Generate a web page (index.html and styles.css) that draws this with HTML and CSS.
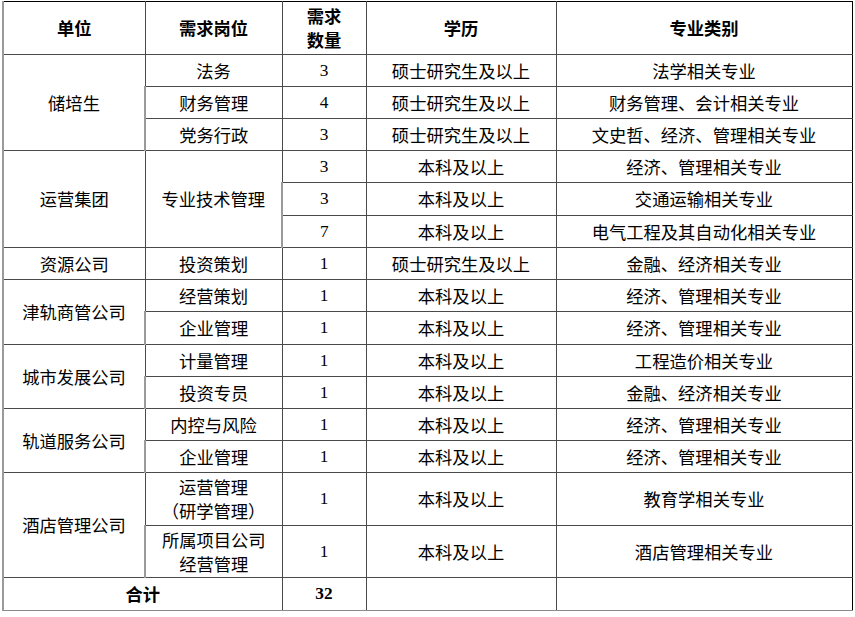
FILE: index.html
```html
<!DOCTYPE html>
<html lang="zh-CN">
<head>
<meta charset="utf-8">
<title>需求岗位</title>
<link rel="stylesheet" href="styles.css">
</head>
<body>
<table class="grid">
  <colgroup>
    <col class="c-unit"><col class="c-post"><col class="c-num"><col class="c-edu"><col class="c-major">
  </colgroup>
  <thead>
    <tr class="r-head">
      <th>单位</th><th>需求岗位</th><th>需求<br>数量</th><th>学历</th><th>专业类别</th>
    </tr>
  </thead>
  <tbody>
    <tr class="r32"><td rowspan="3">储培生</td><td>法务</td><td class="num">3</td><td>硕士研究生及以上</td><td>法学相关专业</td></tr>
    <tr class="r32"><td>财务管理</td><td class="num">4</td><td>硕士研究生及以上</td><td>财务管理、会计相关专业</td></tr>
    <tr class="r32"><td>党务行政</td><td class="num">3</td><td>硕士研究生及以上</td><td>文史哲、经济、管理相关专业</td></tr>
    <tr class="r32"><td rowspan="3">运营集团</td><td rowspan="3">专业技术管理</td><td class="num">3</td><td>本科及以上</td><td>经济、管理相关专业</td></tr>
    <tr class="r33"><td class="num">3</td><td>本科及以上</td><td>交通运输相关专业</td></tr>
    <tr class="r32"><td class="num">7</td><td>本科及以上</td><td>电气工程及其自动化相关专业</td></tr>
    <tr class="r32"><td>资源公司</td><td>投资策划</td><td class="num">1</td><td>硕士研究生及以上</td><td>金融、经济相关专业</td></tr>
    <tr class="r32"><td rowspan="2">津轨商管公司</td><td>经营策划</td><td class="num">1</td><td>本科及以上</td><td>经济、管理相关专业</td></tr>
    <tr class="r33"><td>企业管理</td><td class="num">1</td><td>本科及以上</td><td>经济、管理相关专业</td></tr>
    <tr class="r32"><td rowspan="2">城市发展公司</td><td>计量管理</td><td class="num">1</td><td>本科及以上</td><td>工程造价相关专业</td></tr>
    <tr class="r32"><td>投资专员</td><td class="num">1</td><td>本科及以上</td><td>金融、经济相关专业</td></tr>
    <tr class="r32"><td rowspan="2">轨道服务公司</td><td>内控与风险</td><td class="num">1</td><td>本科及以上</td><td>经济、管理相关专业</td></tr>
    <tr class="r32"><td>企业管理</td><td class="num">1</td><td>本科及以上</td><td>经济、管理相关专业</td></tr>
    <tr class="r53"><td rowspan="2">酒店管理公司</td><td>运营管理<br>（研学管理）</td><td class="num">1</td><td>本科及以上</td><td>教育学相关专业</td></tr>
    <tr class="r52"><td>所属项目公司<br>经营管理</td><td class="num">1</td><td>本科及以上</td><td>酒店管理相关专业</td></tr>
    <tr class="r33 total"><td colspan="2" class="bold">合计</td><td class="num bold">32</td><td></td><td></td></tr>
  </tbody>
</table>
</body>
</html>
```
FILE: styles.css
```css
html, body {
  margin: 0;
  padding: 0;
  background: #fff;
}
body {
  padding: 1px 0 0 2px;
}
.grid {
  border-collapse: collapse;
  table-layout: fixed;
  width: 849px;
  font-family: "Noto Sans CJK SC", "Liberation Serif", serif;
  font-size: 17.3px;
  color: #000;
}
.c-unit { width: 142px; }
.c-post { width: 137px; }
.c-num { width: 84px; }
.c-edu { width: 190px; }
.c-major { width: 296px; }
.grid th, .grid td {
  border: 1px solid #4a4a4a;
  padding: 0;
  text-align: center;
  vertical-align: middle;
  line-height: 24px;
  font-weight: normal;
}
.grid th {
  font-weight: bold;
}
.grid thead tr th { border-top-color: #000; }
.grid tr > :first-child { border-left: 2px solid #9a9a9a; }
.grid tr > :last-child { border-right-color: #000; }
.r-head { height: 53px; }
.r32 { height: 32px; }
.r33 { height: 33px; }
.r52 { height: 52px; }
.r53 { height: 53px; }
.grid .num {
  font-family: "Liberation Serif", serif;
  font-size: 17.3px;
}
.grid .bold { font-weight: bold; }
.grid .total td { border-bottom-color: #8a8a8a; }
```
